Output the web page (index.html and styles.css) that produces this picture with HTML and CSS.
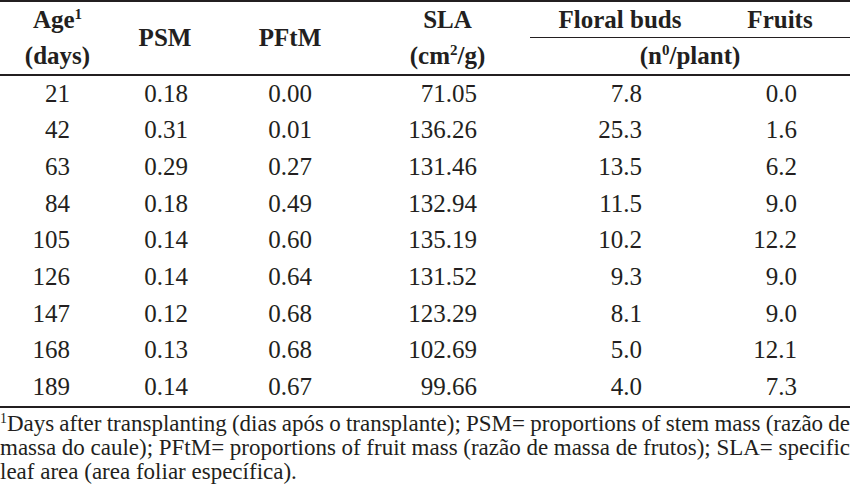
FILE: index.html
```html
<!DOCTYPE html>
<html>
<head>
<meta charset="utf-8">
<link rel="stylesheet" href="styles.css">
</head>
<body>
<div class="page">
<table class="tbl">
  <colgroup>
    <col class="c1"><col class="c2"><col class="c3"><col class="c4"><col class="c5"><col class="c6">
  </colgroup>
  <thead>
    <tr class="hr1">
      <th class="h-top">Age<sup class="sup">1</sup></th>
      <th rowspan="2" class="h-span">PSM</th>
      <th rowspan="2" class="h-span">PFtM</th>
      <th class="h-top">SLA</th>
      <th class="h-top h-under">Floral buds</th>
      <th class="h-top h-under">Fruits</th>
    </tr>
    <tr class="hr2">
      <th class="h-bot">(days)</th>
      <th class="h-bot">(cm<sup class="sup">2</sup>/g)</th>
      <th class="h-bot" colspan="2">(n<sup class="sup">0</sup>/plant)</th>
    </tr>
  </thead>
  <tbody>
    <tr><td class="d1">21</td><td class="d2">0.18</td><td class="d3">0.00</td><td class="d4">71.05</td><td class="d5">7.8</td><td class="d6">0.0</td></tr>
    <tr><td class="d1">42</td><td class="d2">0.31</td><td class="d3">0.01</td><td class="d4">136.26</td><td class="d5">25.3</td><td class="d6">1.6</td></tr>
    <tr><td class="d1">63</td><td class="d2">0.29</td><td class="d3">0.27</td><td class="d4">131.46</td><td class="d5">13.5</td><td class="d6">6.2</td></tr>
    <tr><td class="d1">84</td><td class="d2">0.18</td><td class="d3">0.49</td><td class="d4">132.94</td><td class="d5">11.5</td><td class="d6">9.0</td></tr>
    <tr><td class="d1">105</td><td class="d2">0.14</td><td class="d3">0.60</td><td class="d4">135.19</td><td class="d5">10.2</td><td class="d6">12.2</td></tr>
    <tr><td class="d1">126</td><td class="d2">0.14</td><td class="d3">0.64</td><td class="d4">131.52</td><td class="d5">9.3</td><td class="d6">9.0</td></tr>
    <tr><td class="d1">147</td><td class="d2">0.12</td><td class="d3">0.68</td><td class="d4">123.29</td><td class="d5">8.1</td><td class="d6">9.0</td></tr>
    <tr><td class="d1">168</td><td class="d2">0.13</td><td class="d3">0.68</td><td class="d4">102.69</td><td class="d5">5.0</td><td class="d6">12.1</td></tr>
    <tr class="last"><td class="d1">189</td><td class="d2">0.14</td><td class="d3">0.67</td><td class="d4">99.66</td><td class="d5">4.0</td><td class="d6">7.3</td></tr>
  </tbody>
</table>
<div class="note">
  <span class="line just"><sup class="sup">1</sup>Days after transplanting (dias após o transplante); PSM= proportions of stem mass (razão de</span>
  <span class="line just">massa do caule); PFtM= proportions of fruit mass (razão de massa de frutos); SLA= specific</span>
  <span class="line">leaf area (area foliar específica).</span>
</div>
</div>
</body>
</html>
```

FILE: styles.css
```css
html, body {
  margin: 0;
  padding: 0;
  background: #ffffff;
}

.page {
  width: 850px;
  font-family: "Liberation Serif", "Times New Roman", serif;
  color: #231f20;
}

.tbl {
  width: 850px;
  table-layout: fixed;
  border-collapse: separate;
  border-spacing: 0;
  border-top: 2px solid #231f20;
  font-size: 25px;
}

.c1 { width: 115px; }
.c2 { width: 100px; }
.c3 { width: 150px; }
.c4 { width: 165px; }
.c5 { width: 180px; }
.c6 { width: 140px; }

th {
  font-weight: bold;
  text-align: center;
  padding: 0;
  white-space: nowrap;
}

.hr1 th {
  line-height: 35px;
  vertical-align: top;
}

.h-under {
  border-bottom: 1.5px solid #231f20;
}

.h-span {
  vertical-align: middle !important;
  border-bottom: 2px solid #231f20;
}

.h-bot {
  line-height: 35.5px;
  vertical-align: top;
  border-bottom: 2px solid #231f20;
}

.sup {
  font-size: 0.6em;
  line-height: 0;
  vertical-align: 0.6em;
}

td {
  padding: 0;
  line-height: 36.7px;
  text-align: right;
  white-space: nowrap;
}

.d1 { padding-right: 45px; }
.d2 { padding-right: 27px; }
.d3 { padding-right: 53px; }
.d4 { padding-right: 53px; }
.d5 { padding-right: 68px; }
.d6 { padding-right: 53px; }

.last td {
  border-bottom: 2px solid #231f20;
}

.note {
  font-size: 23px;
  line-height: 24px;
  padding-top: 4px;
}

.line {
  display: block;
  white-space: normal;
}

.just {
  text-align: justify;
  text-align-last: justify;
  word-spacing: -3px;
}
```
